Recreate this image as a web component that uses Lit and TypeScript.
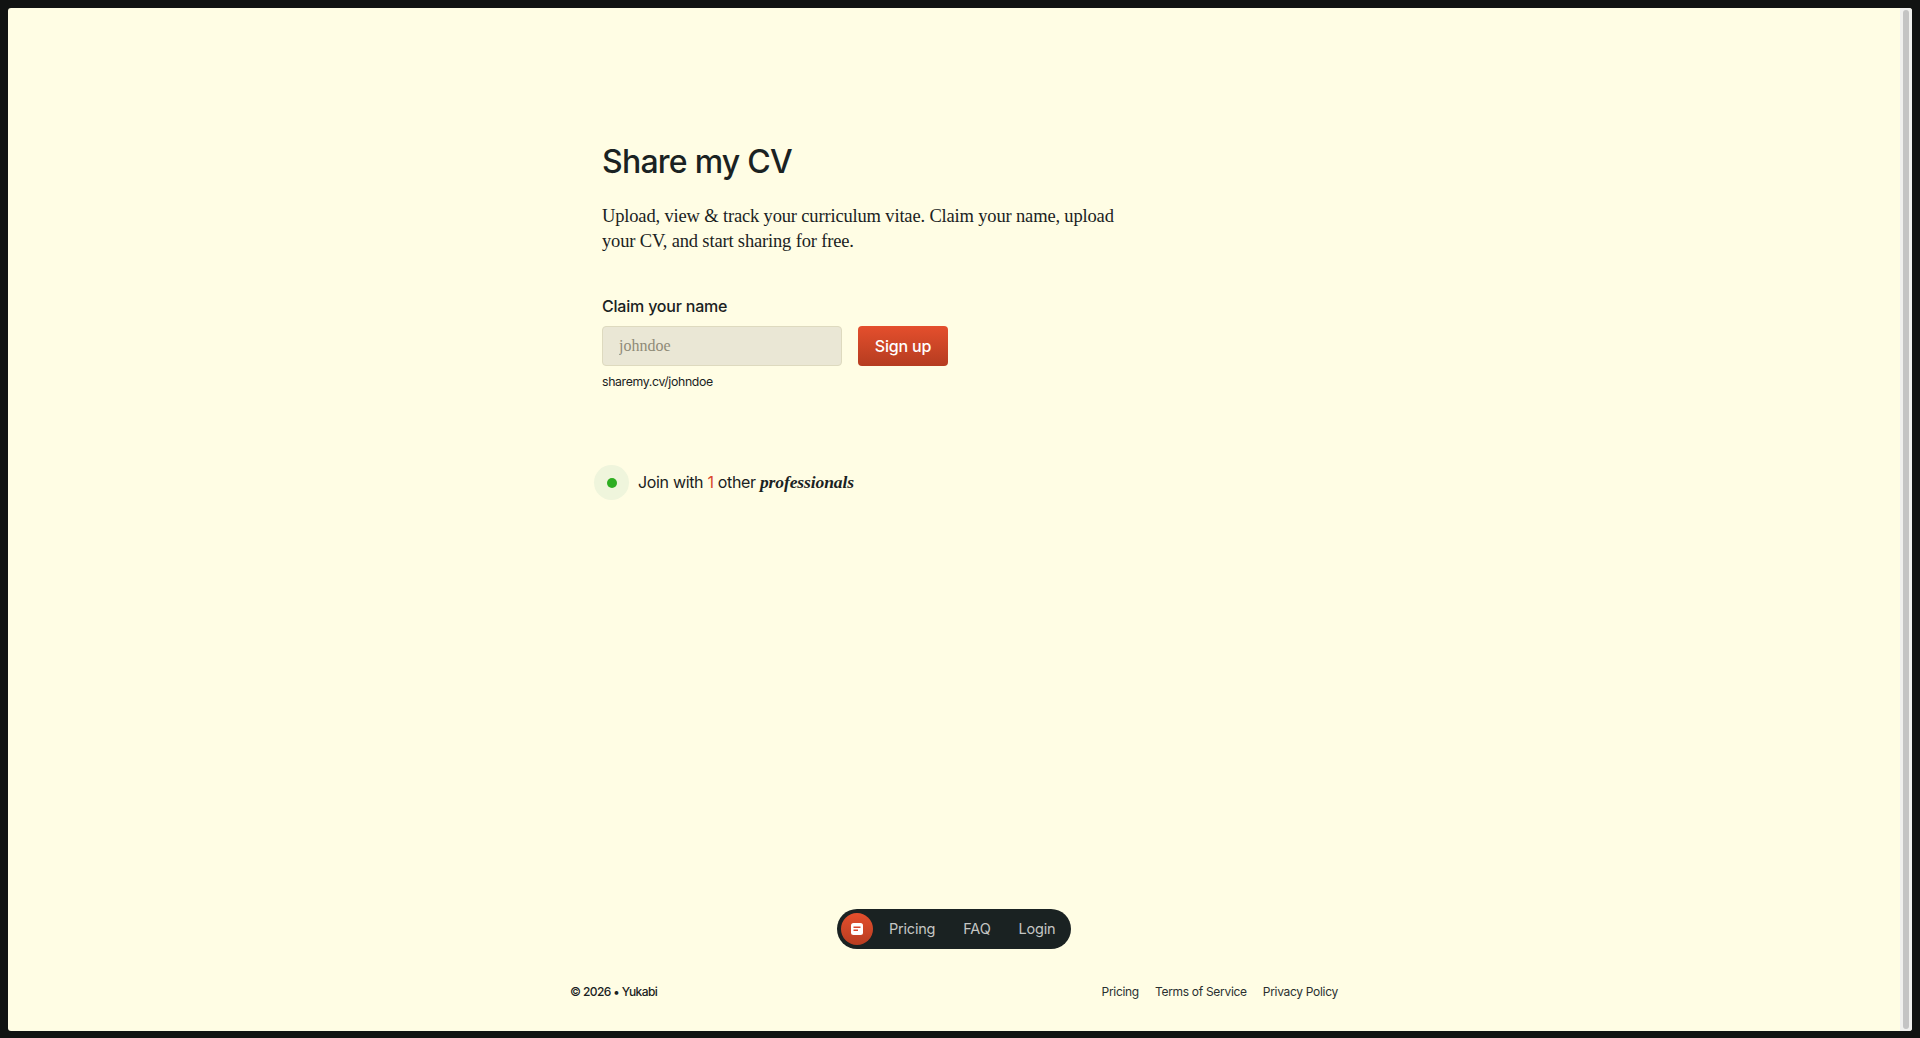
import { LitElement, html, css } from "lit";
import { customElement } from "lit/decorators.js";

@customElement("app-root")
export class AppRoot extends LitElement {
  static styles = css`
    :host {
      display: block;
      box-sizing: border-box;
      height: 100vh;
      background: #111312;
      padding: 8px 8px 7px 8px;
      font-family: Inter, "Liberation Sans", sans-serif;
      color: #1a2222;
    }
    .frame {
      display: flex;
      height: 100%;
      border-radius: 3px;
      overflow: hidden;
      background: #fffde4;
    }
    .page {
      flex: 1;
      min-width: 0;
      display: flex;
      flex-direction: column;
      align-items: center;
    }
    .scrollbar {
      width: 12px;
      box-sizing: border-box;
      padding: 2px 3px;
      background: #f0f0ee;
      display: flex;
    }
    .thumb {
      flex: 1;
      background: #c4c4c4;
      border-radius: 3px;
    }
    .column {
      width: 768px;
      flex: 1;
      display: flex;
      flex-direction: column;
    }
    main {
      flex: 1;
      padding: 133px 32px 0;
      display: flex;
      flex-direction: column;
      align-items: flex-start;
    }
    h1 {
      margin: 0;
      font-size: 32px;
      line-height: 42px;
      font-weight: 500;
      letter-spacing: -0.75px;
    }
    .lead {
      margin: 20.5px 0 0;
      font-family: "Liberation Serif", serif;
      font-size: 18.5px;
      line-height: 25.6px;
      letter-spacing: -0.16px;
    }
    label {
      margin-top: 39.5px;
      font-size: 16px;
      line-height: 24px;
      font-weight: 500;
      letter-spacing: -0.2px;
    }
    .claim {
      margin-top: 8px;
      display: flex;
      gap: 16px;
    }
    input {
      box-sizing: border-box;
      width: 240px;
      height: 40px;
      padding: 0 16px;
      background: #eae7d5;
      border: 1px solid #dedabf;
      border-radius: 4px;
      font-family: "Liberation Serif", serif;
      font-size: 16px;
      outline: none;
    }
    input::placeholder {
      color: #8f8b78;
      opacity: 1;
    }
    button {
      box-sizing: border-box;
      width: 90px;
      height: 40px;
      border: 0;
      border-radius: 4px;
      background: linear-gradient(180deg, #e44f2d 0%, #b53c20 100%);
      color: #fff;
      font-family: Inter, sans-serif;
      font-size: 16px;
      font-weight: 500;
      letter-spacing: -0.2px;
    }
    .url {
      margin-top: 8px;
      font-size: 12.3px;
      line-height: 16px;
      letter-spacing: -0.35px;
    }
    .join {
      margin-top: 75px;
      margin-left: -8px;
      display: flex;
      align-items: center;
      gap: 9px;
      font-size: 16px;
      letter-spacing: -0.33px;
    }
    .halo {
      width: 35px;
      height: 35px;
      border-radius: 50%;
      background: #eff5dc;
      display: flex;
      align-items: center;
      justify-content: center;
    }
    .dot {
      width: 10px;
      height: 10px;
      border-radius: 50%;
      background: #2eae22;
    }
    .one {
      color: #d9472b;
    }
    em {
      font-family: "Liberation Serif", serif;
      font-size: 17.5px;
      font-weight: 700;
      letter-spacing: -0.1px;
    }
    nav {
      align-self: center;
      box-sizing: border-box;
      height: 40px;
      width: 234px;
      border-radius: 20px;
      background: #1a2222;
      padding: 0 4px 1px;
      display: flex;
      align-items: center;
      font-size: 14.5px;
      color: #c4c6c4;
    }
    .logo {
      flex: none;
      width: 32px;
      height: 32px;
      margin-bottom: -1px;
      border-radius: 50%;
      background: linear-gradient(180deg, #e44f2d 0%, #b83d21 100%);
      display: flex;
      align-items: center;
      justify-content: center;
    }
    .links {
      display: flex;
      gap: 28px;
      margin-left: 16px;
      letter-spacing: -0.2px;
    }
    footer {
      margin-top: 35px;
      height: 47px;
      display: flex;
      justify-content: space-between;
      font-size: 12px;
      line-height: 16px;
      letter-spacing: -0.3px;
    }
    .flinks {
      display: flex;
      gap: 16px;
      color: #2a3030;
    }
    .copy {
      font-weight: 500;
      letter-spacing: -0.6px;
    }
  `;

  render() {
    return html`
      <div class="frame">
        <div class="page">
          <div class="column">
            <main>
              <h1>Share my CV</h1>
              <p class="lead">
                Upload, view &amp; track your curriculum vitae. Claim your name, upload<br />
                your CV, and start sharing for free.
              </p>
              <label for="name">Claim your name</label>
              <div class="claim">
                <input id="name" placeholder="johndoe" />
                <button>Sign up</button>
              </div>
              <div class="url">sharemy.cv/johndoe</div>
              <div class="join">
                <span class="halo"><span class="dot"></span></span>
                <span>Join with <span class="one">1</span> other <em>professionals</em></span>
              </div>
            </main>
            <nav>
              <span class="logo">
                <svg width="12" height="12" viewBox="0 0 12 12">
                  <rect width="12" height="12" rx="2.5" fill="#fff" />
                  <rect x="2.5" y="3.5" width="7" height="1.5" fill="#d9472b" />
                  <rect x="2.5" y="6.5" width="4.5" height="1.5" fill="#d9472b" />
                </svg>
              </span>
              <span class="links"><span>Pricing</span><span>FAQ</span><span>Login</span></span>
            </nav>
            <footer>
              <span class="copy">© 2026 • Yukabi</span>
              <span class="flinks"><span>Pricing</span><span>Terms of Service</span><span>Privacy Policy</span></span>
            </footer>
          </div>
        </div>
        <div class="scrollbar"><div class="thumb"></div></div>
      </div>
    `;
  }
}
